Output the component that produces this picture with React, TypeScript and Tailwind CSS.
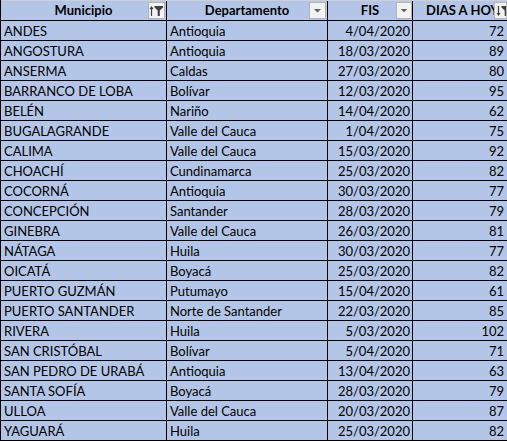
import React from 'react';

const rows: [string, string, string, number][] = [
    ['ANDES', 'Antioquia', '4/04/2020', 72],
    ['ANGOSTURA', 'Antioquia', '18/03/2020', 89],
    ['ANSERMA', 'Caldas', '27/03/2020', 80],
    ['BARRANCO DE LOBA', 'Bolívar', '12/03/2020', 95],
    ['BELÉN', 'Nariño', '14/04/2020', 62],
    ['BUGALAGRANDE', 'Valle del Cauca', '1/04/2020', 75],
    ['CALIMA', 'Valle del Cauca', '15/03/2020', 92],
    ['CHOACHÍ', 'Cundinamarca', '25/03/2020', 82],
    ['COCORNÁ', 'Antioquia', '30/03/2020', 77],
    ['CONCEPCIÓN', 'Santander', '28/03/2020', 79],
    ['GINEBRA', 'Valle del Cauca', '26/03/2020', 81],
    ['NÁTAGA', 'Huila', '30/03/2020', 77],
    ['OICATÁ', 'Boyacá', '25/03/2020', 82],
    ['PUERTO GUZMÁN', 'Putumayo', '15/04/2020', 61],
    ['PUERTO SANTANDER', 'Norte de Santander', '22/03/2020', 85],
    ['RIVERA', 'Huila', '5/03/2020', 102],
    ['SAN CRISTÓBAL', 'Bolívar', '5/04/2020', 71],
    ['SAN PEDRO DE URABÁ', 'Antioquia', '13/04/2020', 63],
    ['SANTA SOFÍA', 'Boyacá', '28/03/2020', 79],
    ['ULLOA', 'Valle del Cauca', '20/03/2020', 87],
    ['YAGUARÁ', 'Huila', '25/03/2020', 82],
];

function Dropdown() {
    return (
        <svg width="15" height="15" viewBox="0 0 15 15">
            <path d="M4 6 H11 L7.5 9.5 Z" fill="#5f5f5f" />
        </svg>
    );
}

function SortFilter({ up }: { up: boolean }) {
    return (
        <svg width="15" height="15" viewBox="0 0 15 15" className="shrink-0">
            {up ? (
                <path d="M2.5 13 V4.5 M1 6 L2.5 4 L4 6" stroke="#404040" strokeWidth="1.2" fill="none" />
            ) : (
                <path d="M2.5 3 V11.5 M1 10 L2.5 12 L4 10" stroke="#404040" strokeWidth="1.2" fill="none" />
            )}
            <path d="M5.5 3 H14 V4.5 L10.8 7.5 V13 H8.7 V7.5 L5.5 4.5 Z" fill="#404040" />
        </svg>
    );
}

function FilterButton({ children, className }: { children: React.ReactNode; className: string }) {
    return (
        <div className={`absolute top-[1px] h-[17px] bg-[#f2f2f2] border border-[#b4b4b4] flex items-center justify-center overflow-hidden ${className}`}>
            {children}
        </div>
    );
}

export default function App() {
    return (
        <div className="w-[507px] h-[441px] overflow-hidden bg-white" style={{ fontFamily: 'Lato, "Liberation Sans", sans-serif' }}>
            <div className="w-[520px] border-l border-black bg-[#b4c6e7] text-[13px] text-black">
                {/* Header */}
                <div className="flex h-[21px] border-t border-t-[#d0d0d0] border-b border-black font-bold leading-[19px]">
                    <div className="relative w-[166px] border-r border-black text-center">
                        Municipio
                        <FilterButton className="right-[1px] w-[17px]"><SortFilter up /></FilterButton>
                    </div>
                    <div className="relative w-[161px] border-r border-black text-center">
                        Departamento
                        <FilterButton className="right-[1px] w-[17px]"><Dropdown /></FilterButton>
                    </div>
                    <div className="relative w-[85px] border-r border-black text-center">
                        FIS
                        <FilterButton className="right-[0px] w-[16px]"><Dropdown /></FilterButton>
                    </div>
                    <div className="relative w-[94px] overflow-hidden whitespace-nowrap pl-[13px]">
                        DIAS A HOY
                        <FilterButton className="right-0 w-[13px] justify-start pl-[1px]"><SortFilter up={false} /></FilterButton>
                    </div>
                </div>

                {/* Data rows */}
                {rows.map(([mun, dep, fis, dias], i) => (
                    <div key={i} className="flex h-[20px] border-b border-black leading-[20px] whitespace-nowrap">
                        <div className="w-[166px] border-r border-black pl-[3px] overflow-hidden">{mun}</div>
                        <div className="w-[161px] border-r border-black pl-[3px] overflow-hidden">{dep}</div>
                        <div className="w-[85px] border-r border-black pr-[2px] text-right">{fis}</div>
                        <div className="w-[94px] pr-[3px] text-right">{dias}</div>
                    </div>
                ))}
            </div>
        </div>
    );
}
